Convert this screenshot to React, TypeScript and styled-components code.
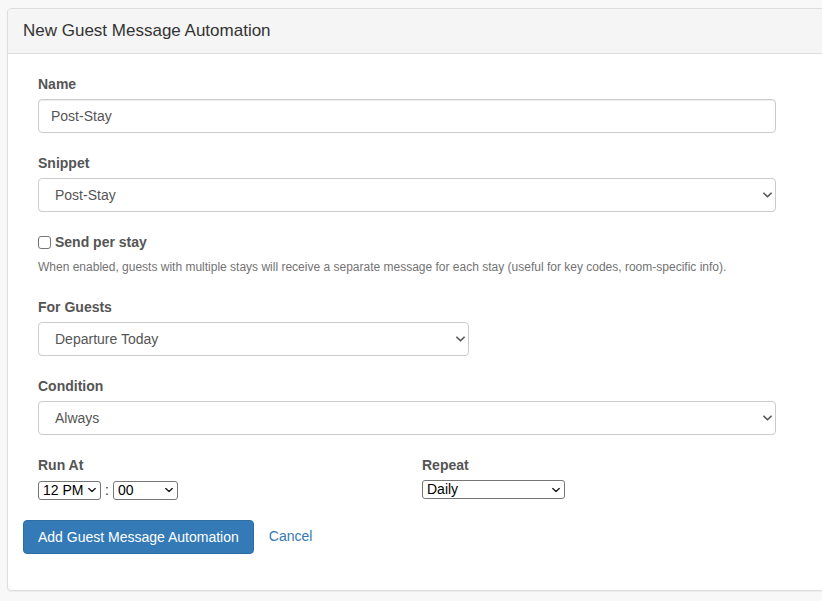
import React from "react";
import styled, { createGlobalStyle } from "styled-components";

const Global = createGlobalStyle`
  html, body { margin: 0; padding: 0; overflow: hidden; }
  body {
    background: #f8f8f8;
    font-family: "Liberation Sans", Arial, Helvetica, sans-serif;
    font-size: 14px;
    line-height: 20px;
    color: #333;
  }
  * { box-sizing: border-box; }
`;

const Page = styled.div`
  padding: 8px 0 0 7px;
  min-height: 601px;
`;

const Panel = styled.section`
  margin-right: -30px;
  background: #fff;
  border: 1px solid #ddd;
  border-radius: 4px;
  box-shadow: 0 1px 1px rgba(0, 0, 0, 0.05);
`;

const Heading = styled.header`
  height: 45px;
  display: flex;
  align-items: center;
  padding: 0 15px;
  background: #f5f5f5;
  border-bottom: 1px solid #ddd;
  border-radius: 3px 3px 0 0;
  font-size: 17px;
  color: #333;
`;

const Body = styled.div`
  padding: 20px 15px 36px;
`;

const Form = styled.form`
  width: 768px;
`;

const Group = styled.div<{ $mb?: number }>`
  padding: 0 15px;
  margin-bottom: ${(p) => (p.$mb ?? 20)}px;
`;

const Label = styled.label`
  display: block;
  font-weight: bold;
  color: #555;
  margin-bottom: 5px;
`;

const TextInput = styled.input`
  display: block;
  width: 100%;
  height: 34px;
  padding: 6px 12px;
  font: inherit;
  color: #555;
  background: #fff;
  border: 1px solid #ccc;
  border-radius: 4px;
  box-shadow: inset 0 1px 1px rgba(0, 0, 0, 0.075);
  outline: none;
`;

const SelectWrap = styled.div<{ $w?: string }>`
  position: relative;
  width: ${(p) => p.$w ?? "100%"};
`;

const Select = styled.select`
  display: block;
  width: 100%;
  height: 34px;
  padding: 6px 24px 6px 16px;
  font: inherit;
  color: #555;
  background: #fff;
  border: 1px solid #ccc;
  border-radius: 4px;
  appearance: none;
  -webkit-appearance: none;
  outline: none;
`;

const Chevron = styled.svg<{ $right: number }>`
  position: absolute;
  right: ${(p) => p.$right}px;
  top: 50%;
  transform: translateY(-50%);
  pointer-events: none;
`;

const CheckRow = styled.label`
  display: flex;
  align-items: center;
  gap: 4px;
  font-weight: bold;
  color: #555;
  height: 20px;
`;

const CheckBox = styled.span`
  display: inline-block;
  width: 13px;
  height: 13px;
  border: 1px solid #767676;
  border-radius: 3px;
  background: #fff;
`;

const Help = styled.p`
  margin: 5px 0 0;
  font-size: 12px;
  line-height: 20px;
  color: #737373;
`;

const Row = styled.div`
  display: grid;
  grid-template-columns: 384px 384px;
  margin-bottom: 20px;
`;

const Col = styled.div`
  padding: 0 15px;
`;

const TimeLine = styled.div`
  display: flex;
  align-items: center;
  gap: 4px;
`;

const SmallWrap = styled.div<{ $w: number }>`
  position: relative;
  width: ${(p) => p.$w}px;
`;

const SmallSelect = styled.select`
  display: block;
  width: 100%;
  height: 19px;
  padding: 0 14px 0 4px;
  font: inherit;
  font-size: 14px;
  line-height: 17px;
  color: #000;
  background: #fff;
  border: 1px solid #767676;
  border-radius: 3px;
  appearance: none;
  -webkit-appearance: none;
  outline: none;
`;

const Colon = styled.span`
  color: #333;
`;

const Actions = styled.div`
  display: flex;
  align-items: center;
  gap: 15px;
`;

const Primary = styled.button`
  height: 34px;
  padding: 0 14px;
  font: inherit;
  color: #fff;
  background: #337ab7;
  border: 1px solid #2e6da4;
  border-radius: 4px;
  cursor: pointer;
`;

const Link = styled.a`
  color: #337ab7;
  text-decoration: none;
  margin-top: -2px;
`;

const Chev = ({ right, w = 9, h = 6, stroke = "#555" }: { right: number; w?: number; h?: number; stroke?: string }) => (
  <Chevron $right={right} width={w} height={h} viewBox="0 0 10 6">
    <path d="M1 1 L5 5 L9 1" fill="none" stroke={stroke} strokeWidth={1.8} strokeLinecap="round" strokeLinejoin="round" />
  </Chevron>
);

export default function App() {
  return (
    <>
      <Global />
      <Page>
        <Panel>
          <Heading>New Guest Message Automation</Heading>
          <Body>
            <Form onSubmit={(e) => e.preventDefault()}>
              <Group>
                <Label>Name</Label>
                <TextInput defaultValue="Post-Stay" />
              </Group>
              <Group>
                <Label>Snippet</Label>
                <SelectWrap>
                  <Select defaultValue="Post-Stay">
                    <option>Post-Stay</option>
                  </Select>
                  <Chev right={4} />
                </SelectWrap>
              </Group>
              <Group>
                <CheckRow>
                  <CheckBox />
                  Send per stay
                </CheckRow>
                <Help>
                  When enabled, guests with multiple stays will receive a separate message for each stay (useful for key codes, room-specific info).
                </Help>
              </Group>
              <Group>
                <Label>For Guests</Label>
                <SelectWrap $w="431px">
                  <Select defaultValue="Departure Today">
                    <option>Departure Today</option>
                  </Select>
                  <Chev right={4} />
                </SelectWrap>
              </Group>
              <Group>
                <Label>Condition</Label>
                <SelectWrap>
                  <Select defaultValue="Always">
                    <option>Always</option>
                  </Select>
                  <Chev right={4} />
                </SelectWrap>
              </Group>
              <Row>
                <Col>
                  <Label>Run At</Label>
                  <TimeLine>
                    <SmallWrap $w={63}>
                      <SmallSelect defaultValue="12 PM">
                        <option>12 PM</option>
                      </SmallSelect>
                      <Chev right={5} w={8} h={5} stroke="#222" />
                    </SmallWrap>
                    <Colon>:</Colon>
                    <SmallWrap $w={65}>
                      <SmallSelect defaultValue="00">
                        <option>00</option>
                      </SmallSelect>
                      <Chev right={5} w={8} h={5} stroke="#222" />
                    </SmallWrap>
                  </TimeLine>
                </Col>
                <Col>
                  <Label>Repeat</Label>
                  <SmallWrap $w={143}>
                    <SmallSelect defaultValue="Daily">
                      <option>Daily</option>
                    </SmallSelect>
                    <Chev right={5} w={8} h={5} stroke="#222" />
                  </SmallWrap>
                </Col>
              </Row>
              <Actions>
                <Primary type="submit">Add Guest Message Automation</Primary>
                <Link href="#">Cancel</Link>
              </Actions>
            </Form>
          </Body>
        </Panel>
      </Page>
    </>
  );
}
